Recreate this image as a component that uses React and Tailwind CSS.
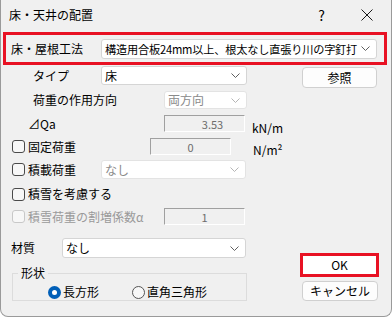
import React from "react";

const Chevron = ({ color = "#5f5f5f" }) => (
  <svg width="9" height="5" viewBox="0 0 9 5" className="shrink-0">
    <path d="M0.5 0.5 L4.5 4.5 L8.5 0.5" fill="none" stroke={color} strokeWidth="1" />
  </svg>
);

const Select = ({ className, value, disabled, textClass = "" }) => (
  <div
    className={`flex items-center justify-between bg-white border rounded-[3px] pl-[3px] pr-[6px] shrink-0 ${
      disabled ? "border-[#e3e3e3] text-[#8a8a8a]" : "border-[#d5d5d5] text-black"
    } ${className}`}
  >
    <span className={`whitespace-nowrap leading-[16px] ${textClass}`}>{value}</span>
    <Chevron color={disabled ? "#b5b5b5" : "#5f5f5f"} />
  </div>
);

const Sunken = ({ value, className }) => (
  <div
    className={`w-[81px] h-[17px] bg-[#f0f0f0] border-t border-l border-[#a0a0a0] border-r border-b border-r-white border-b-white flex items-center justify-center text-[#6d6d6d] text-[11px] leading-[14px] ${className}`}
  >
    {value}
  </div>
);

const Check = ({ disabled }) => (
  <div
    className={`w-[13px] h-[13px] rounded-[3px] border bg-[#f7f7f7] ${
      disabled ? "border-[#c8c8c8]" : "border-[#4a4a4a]"
    }`}
  />
);

export default function App() {
  return (
    <div className="w-[392px] h-[317px] bg-white font-['Noto_Sans_CJK_JP',sans-serif] text-[12px] text-black">
      <div className="w-[392px] h-[317px] bg-[#f0f0f0] border-l border-r border-b border-[#9a9a9a] rounded-b-[8px] flex flex-col">
        {/* title bar */}
        <div className="h-[30px] flex items-center pl-[8px]">
          <span>床・天井の配置</span>
          <span className="ml-auto mr-[36px] text-[14px]">?</span>
          <svg width="12" height="12" viewBox="0 0 12 12" className="mr-[18px]">
            <path d="M0.5 0.5 L11.5 11.5 M11.5 0.5 L0.5 11.5" stroke="#1a1a1a" strokeWidth="1" />
          </svg>
        </div>

        {/* 床・屋根工法 */}
        <div className="ml-[2px] mt-[2px] w-[384px] h-[33px] border-[3px] border-[#e81123] flex items-center pl-[5px]">
          <span className="w-[90px] shrink-0">床・屋根工法</span>
          <Select
            className="w-[276px] h-[20px]"
            textClass="text-[11.2px] tracking-[-0.2px]"
            value="構造用合板24mm以上、根太なし直張り川の字釘打"
          />
        </div>

        <div className="flex">
          {/* left column */}
          <div className="w-[250px] flex flex-col">
            <div className="mt-[1px] h-[19px] flex items-center">
              <span className="ml-[32px] w-[68px] whitespace-nowrap">タイプ</span>
              <Select className="w-[146px] h-[19px]" value="床" />
            </div>
            <div className="mt-[6px] h-[18px] flex items-center">
              <span className="ml-[32px] w-[131px] whitespace-nowrap">荷重の作用方向</span>
              <Select className="w-[83px] h-[18px]" value="両方向" disabled />
            </div>
            <div className="mt-[6px] h-[17px] flex items-center relative">
              <span className="ml-[27px] w-[136px]">⊿Qa</span>
              <Sunken value="3.53" className="pl-[16px]" />
              <span className="absolute left-[251px] top-[4px] whitespace-nowrap">kN/m</span>
            </div>
            <div className="mt-[6px] h-[17px] flex items-center relative">
              <div className="ml-[11px]"><Check /></div>
              <span className="ml-[3px] w-[122px]">固定荷重</span>
              <Sunken value="0" />
              <span className="absolute left-[252px] top-[3px] whitespace-nowrap">N/m²</span>
            </div>
            <div className="mt-[5px] h-[19px] flex items-center">
              <div className="ml-[11px]"><Check /></div>
              <span className="ml-[3px] w-[73px]">積載荷重</span>
              <Select className="w-[145px] h-[19px]" value="なし" disabled />
            </div>
            <div className="mt-[7px] h-[16px] flex items-center">
              <div className="ml-[11px]"><Check /></div>
              <span className="ml-[3px]">積雪を考慮する</span>
            </div>
            <div className="mt-[6px] h-[17px] flex items-center">
              <div className="ml-[11px]"><Check disabled /></div>
              <span className="ml-[3px] w-[136px] text-[#9a9a9a] whitespace-nowrap">積雪荷重の割増係数α</span>
              <Sunken value="1" />
            </div>
            <div className="mt-[13px] h-[20px] flex items-center">
              <span className="ml-[10px] w-[51px]">材質</span>
              <Select className="w-[184px] h-[20px]" value="なし" />
            </div>
            <fieldset className="mt-[7px] ml-[11px] w-[235px] h-[36px] border border-[#dcdcdc] flex">
              <legend className="ml-[5px] px-[3px] leading-[16px]">形状</legend>
              <div className="flex items-center h-[18px] mt-[2px]">
                <div className="ml-[35px] w-[13px] h-[13px] rounded-full bg-[#005fb8] flex items-center justify-center">
                  <div className="w-[5px] h-[5px] rounded-full bg-white" />
                </div>
                <span className="ml-[2px]">長方形</span>
                <div className="ml-[33px] w-[13px] h-[13px] rounded-full border border-[#555] bg-[#f7f7f7]" />
                <span className="ml-[2px]">直角三角形</span>
              </div>
            </fieldset>
          </div>

          {/* right column */}
          <div className="ml-[51px] flex flex-col">
            <button className="mt-[2px] w-[75px] h-[21px] bg-[#fdfdfd] border border-[#d0d0d0] rounded-[4px] text-[12px] leading-none">
              参照
            </button>
            <button className="mt-[165px] -ml-[2px] w-[79px] h-[24px] bg-white border-[3px] border-[#e81123] text-[12px] leading-none">
              OK
            </button>
            <button className="mt-[4px] w-[76px] h-[20px] bg-[#fdfdfd] border border-[#d0d0d0] rounded-[4px] text-[12px] leading-none">
              キャンセル
            </button>
          </div>
        </div>
      </div>
    </div>
  );
}
